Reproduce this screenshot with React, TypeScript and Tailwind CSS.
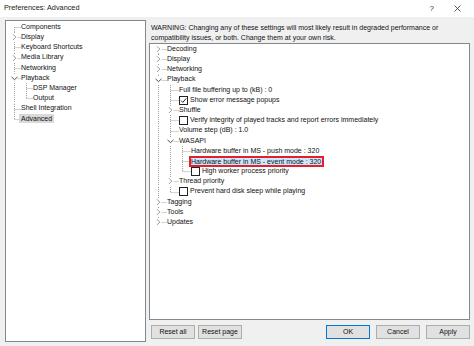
import React from "react";

type Guide = "I" | "T" | "L" | "F" | " ";

type Row = {
  label: string;
  guides: Guide[];
  expander?: "open" | "closed";
  checkbox?: boolean;
  selected?: boolean;
  marked?: boolean;
};

const leftRows: Row[] = [
  { label: "Components", guides: ["F"] },
  { label: "Display", guides: ["T"], expander: "closed" },
  { label: "Keyboard Shortcuts", guides: ["T"] },
  { label: "Media Library", guides: ["T"], expander: "closed" },
  { label: "Networking", guides: ["T"] },
  { label: "Playback", guides: ["T"], expander: "open" },
  { label: "DSP Manager", guides: ["I", "T"] },
  { label: "Output", guides: ["I", "L"] },
  { label: "Shell Integration", guides: ["T"] },
  { label: "Advanced", guides: ["L"], selected: true },
];

const rightRows: Row[] = [
  { label: "Decoding", guides: ["F"], expander: "closed" },
  { label: "Display", guides: ["T"], expander: "closed" },
  { label: "Networking", guides: ["T"], expander: "closed" },
  { label: "Playback", guides: ["T"], expander: "open" },
  { label: "Full file buffering up to (kB) : 0", guides: ["I", "T"] },
  { label: "Show error message popups", guides: ["I", "T"], checkbox: true },
  { label: "Shuffle", guides: ["I", "T"], expander: "closed" },
  { label: "Verify integrity of played tracks and report errors immediately", guides: ["I", "T"], checkbox: false },
  { label: "Volume step (dB) : 1.0", guides: ["I", "T"] },
  { label: "WASAPI", guides: ["I", "T"], expander: "open" },
  { label: "Hardware buffer in MS - push mode : 320", guides: ["I", "I", "T"] },
  { label: "Hardware buffer in MS - event mode : 320", guides: ["I", "I", "T"], marked: true },
  { label: "High worker process priority", guides: ["I", "I", "L"], checkbox: false },
  { label: "Thread priority", guides: ["I", "T"], expander: "closed" },
  { label: "Prevent hard disk sleep while playing", guides: ["I", "L"], checkbox: false },
  { label: "Tagging", guides: ["T"], expander: "closed" },
  { label: "Tools", guides: ["T"], expander: "closed" },
  { label: "Updates", guides: ["L"], expander: "closed" },
];

const H = 10.2;

function GuideCell({ g, own, gap, expander }: { g: Guide; own: boolean; gap: number; expander?: "open" | "closed" }) {
  const w = own ? 12 + gap : 12;
  const c = 6.5;
  const mid = H / 2;
  const stroke = "#a0a0a0";
  return (
    <svg width={w} height={H} className="shrink-0 block">
      {(g === "I" || g === "T") && <line x1={c} y1={0} x2={c} y2={H} stroke={stroke} strokeDasharray="1 1" />}
      {g === "L" && <line x1={c} y1={0} x2={c} y2={mid} stroke={stroke} strokeDasharray="1 1" />}
      {g === "F" && <line x1={c} y1={mid} x2={c} y2={H} stroke={stroke} strokeDasharray="1 1" />}
      {own && g !== " " && (
        <line x1={expander ? c + 3 : c} y1={mid + 0.5} x2={w} y2={mid + 0.5} stroke={stroke} strokeDasharray="1 1" />
      )}
      {expander && <rect x={c - 4} y={mid - 4} width={7} height={8} fill="white" />}
      {expander === "closed" && (
        <path d={`M${c - 1.5} ${mid - 2.8} L${c + 1.3} ${mid} L${c - 1.5} ${mid + 2.8}`} fill="none" stroke="#8a8a8a" strokeWidth={0.9} />
      )}
      {expander === "open" && (
        <path d={`M${c - 3} ${mid - 1.3} L${c} ${mid + 1.6} L${c + 3} ${mid - 1.3}`} fill="none" stroke="#3c3c3c" strokeWidth={0.9} />
      )}
    </svg>
  );
}

function CheckBox({ checked }: { checked: boolean }) {
  return (
    <svg width={9} height={9} className="shrink-0 mr-[2px] block">
      <rect x={0.5} y={0.5} width={8} height={8} fill="white" stroke="#222222" />
      {checked && <path d="M2 4.6 L3.8 6.4 L7.2 2.4" fill="none" stroke="#111111" strokeWidth={0.9} />}
    </svg>
  );
}

function Tree({ rows, gap }: { rows: Row[]; gap: number }) {
  return (
    <div className="flex flex-col">
      {rows.map((r, i) => (
        <div key={i} className="flex items-center h-[10.2px] whitespace-nowrap">
          {r.guides.map((g, j) => (
            <GuideCell key={j} g={g} own={j === r.guides.length - 1} gap={gap} expander={j === r.guides.length - 1 ? r.expander : undefined} />
          ))}
          {r.checkbox !== undefined && <CheckBox checked={r.checkbox} />}
          {r.selected ? (
            <span className="bg-[#d9d9d9] -ml-[2px] px-[2px] leading-[9px]">{r.label}</span>
          ) : r.marked ? (
            <span className="bg-[#cce8ff] border-2 border-[#e2202c] -ml-[2px] pr-[1px] leading-[7px]">{r.label}</span>
          ) : (
            <span>{r.label}</span>
          )}
        </div>
      ))}
    </div>
  );
}

function Btn({ label, primary }: { label: string; primary?: boolean }) {
  return (
    <button
      className={
        "w-[44px] h-[14px] flex items-center justify-center bg-[#e1e1e1] border " +
        (primary ? "border-[#0078d7]" : "border-[#adadad]")
      }
    >
      {label}
    </button>
  );
}

export default function App() {
  return (
    <div className="w-[474px] h-[346px] bg-[#f0f0f0] flex flex-col overflow-hidden font-['Liberation_Sans',Arial,sans-serif] text-[7px] text-[#111]">
      <div className="h-[17px] bg-white flex items-center justify-between pl-[4px] pr-[13px] shrink-0">
        <span className="text-[7.3px] text-[#1a1a1a]">Preferences: Advanced</span>
        <div className="flex items-center gap-[20px] text-[8px] text-[#333]">
          <span>?</span>
          <svg width={7} height={7}>
            <path d="M0.5 0.5 L6.5 6.5 M6.5 0.5 L0.5 6.5" stroke="#333333" strokeWidth={0.8} />
          </svg>
        </div>
      </div>
      <div className="flex flex-1 pt-[3px] pl-[5px] pr-[4px]">
        <div className="w-[141px] h-[322px] bg-white border border-[#828790] pl-[2px] pt-[1px]">
          <Tree rows={leftRows} gap={1} />
        </div>
        <div className="flex-1 ml-[3px] flex flex-col">
          <div className="pl-[2px] pt-[3px] leading-[10px] h-[23px]">
            <div>WARNING: Changing any of these settings will most likely result in degraded performance or</div>
            <div>compatibility issues, or both. Change them at your own risk.</div>
          </div>
          <div className="h-[277px] bg-white border border-[#828790] pl-[2px]">
            <Tree rows={rightRows} gap={3} />
          </div>
          <div className="flex items-center mt-[5px] pl-[2px]">
            <div className="flex gap-[3px]">
              <Btn label="Reset all" />
              <Btn label="Reset page" />
            </div>
            <div className="flex gap-[6px] ml-auto">
              <Btn label="OK" primary />
              <Btn label="Cancel" />
              <Btn label="Apply" />
            </div>
          </div>
        </div>
      </div>
    </div>
  );
}
